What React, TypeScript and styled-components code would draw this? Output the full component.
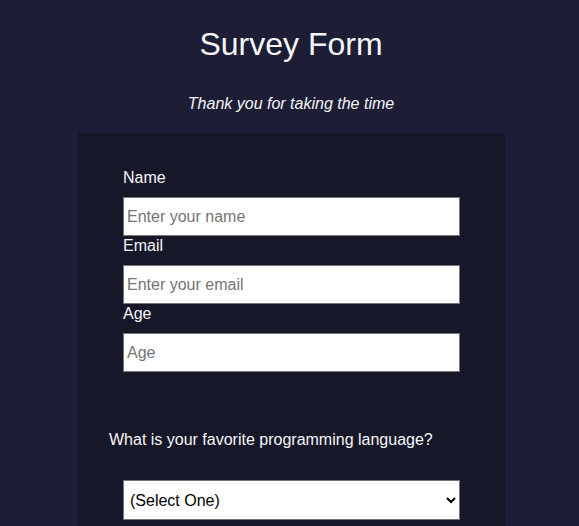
import React from 'react';
import styled, { createGlobalStyle } from 'styled-components';

const GlobalStyle = createGlobalStyle`
    body {
        margin: 0;
        background-color: #1d1d36;
        color: #f5f6f7;
        font-family: 'Liberation Sans', Arial, sans-serif;
    }
`;

const Page = styled.main`
    display: flex;
    flex-direction: column;
    align-items: center;
    padding-left: 3px;
`;

const Title = styled.h1`
    margin: 26px 0 0;
    font-size: 32px;
    font-weight: 400;
    line-height: normal;
    text-align: center;
`;

const Description = styled.p`
    margin: 32px 0 0;
    font-size: 16px;
    font-style: italic;
    line-height: normal;
    text-align: center;
`;

const Form = styled.form`
    box-sizing: border-box;
    width: 427px;
    margin: 20px 0 0 1px;
    padding: 35px 45px 60px 45px;
    background-color: #17172a;
    display: flex;
    flex-direction: column;
`;

const Label = styled.label`
    display: block;
    font-size: 16px;
    line-height: 18px;
    padding-top: 1px;
    margin-bottom: 10px;
`;

const Input = styled.input`
    box-sizing: border-box;
    width: 337px;
    height: 39px;
    margin: 0;
    padding: 0 3px;
    border: 1px solid #767676;
    border-radius: 0;
    background: #fff;
    color: #333;
    font-family: 'Liberation Sans', Arial, sans-serif;
    font-size: 16px;

    &::placeholder {
        color: #757575;
    }
`;

const Question = styled.p`
    margin: 59px 0 31px -14px;
    font-size: 16px;
    line-height: 18px;
`;

const Select = styled.select`
    box-sizing: border-box;
    width: 337px;
    height: 40px;
    margin: 0;
    padding: 0 2px;
    border: 1px solid #767676;
    border-radius: 0;
    background: #fff;
    color: #000;
    font-family: 'Liberation Sans', Arial, sans-serif;
    font-size: 16px;
`;

const fields = [
    { id: 'name', label: 'Name', type: 'text', placeholder: 'Enter your name' },
    { id: 'email', label: 'Email', type: 'email', placeholder: 'Enter your email' },
    { id: 'number', label: 'Age', type: 'number', placeholder: 'Age' },
];

const App = () => {
    return (
        <Page>
            <GlobalStyle />
            <Title id='title'>Survey Form</Title>
            <Description id='description'>Thank you for taking the time</Description>
            <Form id='survey-form'>
                {fields.map(f => (
                    <React.Fragment key={f.id}>
                        <Label htmlFor={f.id}>{f.label}</Label>
                        <Input id={f.id} type={f.type} placeholder={f.placeholder} />
                    </React.Fragment>
                ))}
                <Question>What is your favorite programming language?</Question>
                <Select id='dropdown' defaultValue=''>
                    <option value=''>(Select One)</option>
                    <option value='js'>JavaScript</option>
                    <option value='py'>Python</option>
                </Select>
            </Form>
        </Page>
    );
};

export default App;
